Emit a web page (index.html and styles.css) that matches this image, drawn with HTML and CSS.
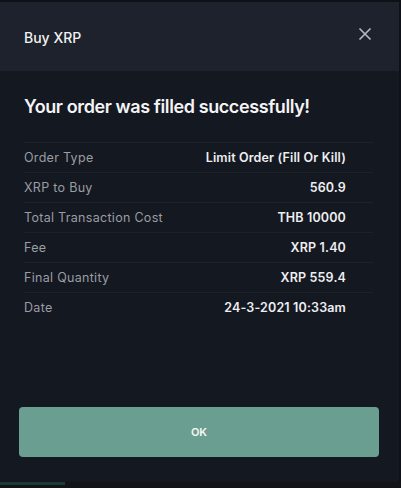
FILE: index.html
```html
<!DOCTYPE html>
<html>
<head>
<meta charset="utf-8">
<link rel="stylesheet" href="styles.css">
</head>
<body>
<div class="modal">
  <div class="modal-header">
    <span class="modal-title">Buy XRP</span>
    <svg class="close" width="14" height="14" viewBox="0 0 14 14"><path d="M1.5 1.5L12.5 12.5M12.5 1.5L1.5 12.5" stroke="#b4b6bb" stroke-width="1.7" fill="none"/></svg>
  </div>
  <div class="modal-body">
    <h1 class="headline">Your order was filled successfully!</h1>
    <div class="details">
      <div class="row"><span class="label">Order Type</span><span class="value">Limit Order (Fill Or Kill)</span></div>
      <div class="row"><span class="label">XRP to Buy</span><span class="value">560.9</span></div>
      <div class="row"><span class="label">Total Transaction Cost</span><span class="value">THB 10000</span></div>
      <div class="row"><span class="label">Fee</span><span class="value">XRP 1.40</span></div>
      <div class="row"><span class="label">Final Quantity</span><span class="value">XRP 559.4</span></div>
      <div class="row"><span class="label">Date</span><span class="value">24-3-2021 10:33am</span></div>
    </div>
  </div>
  <div class="modal-footer">
    <button class="ok">OK</button>
  </div>
</div>
<div class="page-bottom"><div class="page-bar"></div></div>
</body>
</html>
```
FILE: styles.css
```css
html, body {
  margin: 0;
  padding: 0;
  background: #0e1116;
  font-family: Inter, "Noto Sans", sans-serif;
}
body {
  width: 401px;
  height: 488px;
  overflow: hidden;
}
.modal {
  width: 399px;
  height: 480px;
  margin-top: 2px;
  background: #141821;
  display: flex;
  flex-direction: column;
}
.modal-header {
  height: 69px;
  background: #1e222c;
  display: flex;
  align-items: center;
  justify-content: space-between;
  padding: 0 27px 0 24px;
  box-sizing: border-box;
}
.modal-title {
  color: #f2f2f3;
  font-size: 14px;
  font-weight: 500;
  margin-top: 1px;
}
.close {
  display: block;
  margin-top: -6px;
}
.modal-body {
  padding: 0 26px 0 24px;
  flex: 1;
}
.headline {
  margin: 0;
  padding-top: 24px;
  height: 71px;
  box-sizing: border-box;
  font-size: 18px;
  line-height: 24px;
  font-weight: 600;
  letter-spacing: -0.4px;
  color: #f4f4f5;
}
.row {
  display: flex;
  justify-content: space-between;
  align-items: center;
  height: 30px;
  border-top: 1px solid #1d212a;
  box-sizing: border-box;
  padding-right: 27px;
  padding-bottom: 1px;
  font-size: 12.5px;
}
.label {
  color: #9b9da3;
  letter-spacing: 0.3px;
}
.value {
  color: #eeeef0;
  font-weight: 600;
  letter-spacing: 0.15px;
}
.modal-footer {
  padding: 0 20px 25px 19px;
}
.ok {
  display: block;
  width: 100%;
  height: 50px;
  border: none;
  border-radius: 4px;
  background: #6a9e91;
  color: #f6f8f7;
  font-family: Inter, "Noto Sans", sans-serif;
  font-size: 11px;
  font-weight: 600;
}
.page-bottom {
  height: 6px;
  background: #121418;
}
.page-bar {
  width: 65px;
  height: 3px;
  background: #1d3a36;
}
```
